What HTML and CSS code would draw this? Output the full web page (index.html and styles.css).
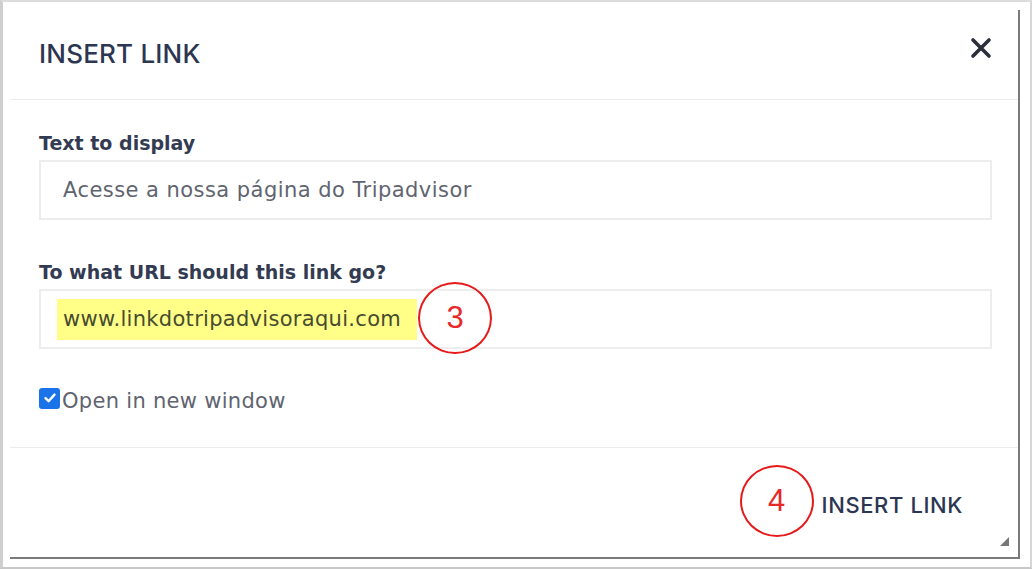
FILE: index.html
```html
<!DOCTYPE html>
<html>
<head>
<meta charset="utf-8">
<link rel="stylesheet" href="styles.css">
</head>
<body>
<div class="frame">
  <div class="dialog">
    <div class="header">
      <h1 class="title">INSERT LINK</h1>
      <span class="close" aria-label="close">
        <svg width="22" height="22" viewBox="0 0 22 22"><path d="M3 3 L19 19 M19 3 L3 19" stroke="#2b2f3a" stroke-width="3.6" stroke-linecap="round"/></svg>
      </span>
    </div>
    <div class="body">
      <div class="field">
        <div class="label">Text to display</div>
        <div class="input"><span class="value">Acesse a nossa página do Tripadvisor</span></div>
      </div>
      <div class="field">
        <div class="label">To what URL should this link go?</div>
        <div class="input">
          <span class="hl">www.linkdotripadvisoraqui.com</span>
          <span class="step step-3">3</span>
        </div>
      </div>
      <label class="check">
        <span class="box"><svg width="14" height="14" viewBox="0 0 14 14"><path d="M2.5 7.2 L5.6 10.2 L11.5 3.6" fill="none" stroke="#fff" stroke-width="2.4" stroke-linecap="round" stroke-linejoin="round"/></svg></span>
        <span class="check-text">Open in new window</span>
      </label>
    </div>
    <div class="footer">
      <span class="step step-4">4</span>
      <span class="btn">INSERT LINK</span>
      <svg class="grip" width="12" height="12" viewBox="0 0 12 12"><path d="M11 2 L11 11 L2 11 Z" fill="#777"/></svg>
    </div>
  </div>
</div>
</body>
</html>
```
FILE: styles.css
```css
* { box-sizing: border-box; }
html, body { margin: 0; padding: 0; background: #fff; }
body { width: 1032px; height: 570px; overflow: hidden; font-family: Inter, "Open Sans", sans-serif; }

.frame {
  width: 1032px;
  height: 569px;
  border-top: 2px solid #dcdcdc;
  border-left: 3px solid #cfcfcf;
  border-right: 2px solid #d6d6d6;
  border-bottom: 2px solid #c8c8c8;
  padding: 8px 0 0 7px;
  background: #fff;
}
.dialog {
  width: 1010px;
  height: 549px;
  border-right: 2px solid #7a7a7a;
  border-bottom: 2px solid #7a7a7a;
  display: flex;
  flex-direction: column;
  position: relative;
}
.header {
  height: 90px;
  border-bottom: 1px solid #ececec;
  display: flex;
  align-items: center;
  justify-content: space-between;
  padding: 0 26px 0 29px;
}
.title {
  margin: 0;
  font-size: 26px;
  font-weight: 500;
  color: #2c3652;
  letter-spacing: 0.2px;
  padding-bottom: 2px;
}
.close { display: flex; margin-top: -14px; }

.body {
  padding: 32px 26px 0 29px;
  display: flex;
  flex-direction: column;
  border-bottom: 1px solid #ececec;
  flex: none;
  height: 348px;
}
.field { display: flex; flex-direction: column; margin-bottom: 41px; }
.field + .field { margin-bottom: 34px; }
.label {
  font-family: "DejaVu Sans", sans-serif;
  font-size: 19px;
  font-weight: 700;
  color: #333b52;
  line-height: 22px;
  margin-bottom: 6px;
}
.input {
  height: 60px;
  border: 2px solid #ededed;
  display: flex;
  align-items: center;
  padding-left: 16px;
  font-family: "DejaVu Sans", sans-serif;
  font-size: 21px;
  color: #5f6470;
  position: relative;
}
.value { padding-left: 6px; letter-spacing: 0.45px; }
.hl {
  background: #ffff88;
  height: 41px;
  display: flex;
  align-items: center;
  padding: 0 16px 0 6px;
  color: #474c2e;
  letter-spacing: 0.3px;
}
.step {
  position: absolute;
  width: 74px;
  height: 72px;
  border: 2px solid #e61a1a;
  border-radius: 50%;
  display: flex;
  align-items: center;
  justify-content: center;
  font-family: "Liberation Sans", Arial, sans-serif;
  font-size: 31px;
  color: #e82828;
  letter-spacing: 0;
}
.step-3 { left: 377px; top: -9px; }

.check { display: flex; align-items: center; margin-top: 0; }
.box {
  width: 21px;
  height: 21px;
  background: #1a73e8;
  border-radius: 3px;
  display: flex;
  align-items: center;
  justify-content: center;
  margin-right: 2px;
}
.check-text { font-family: "DejaVu Sans", sans-serif; font-size: 21px; color: #5f6470; padding-top: 6px; letter-spacing: 0.3px; }

.footer {
  flex: 1;
  display: flex;
  align-items: center;
  justify-content: flex-end;
  padding-right: 55px;
  position: relative;
}
.footer .step { position: static; margin-right: 8px; margin-top: -4px; }
.btn {
  font-size: 22px;
  font-weight: 500;
  color: #2c3652;
  letter-spacing: 0.6px;
  padding-top: 4px;
}
.grip { position: absolute; right: 8px; bottom: 10px; }
```
